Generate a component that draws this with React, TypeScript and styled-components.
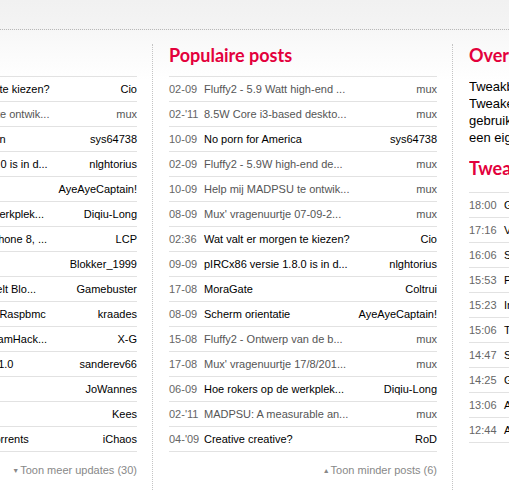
import React from "react";
import styled, { createGlobalStyle } from "styled-components";

const GlobalStyle = createGlobalStyle`
	html, body {
		margin: 0;
		padding: 0;
		background: #fff;
		overflow: hidden;
	}
	body {
		font-family: "Liberation Sans", Arial, sans-serif;
		font-size: 11px;
		color: #000;
	}
`;

const TopBar = styled.div`
	height: 29px;
	background: linear-gradient(#f1f1f1, #f4f4f4);
	border-bottom: 1px dotted #b8b8b8;
`;

const Main = styled.div`
	background: linear-gradient(#f7f7f7, #fff 50px);
	padding-top: 14px;
	height: 460px;
`;

// the first column sits partly off the left edge of the window
const Columns = styled.div`
	display: flex;
	margin-left: -148px;
`;

const Column = styled.section<{ $divider?: boolean }>`
	flex: 0 0 300px;
	box-sizing: border-box;
	padding: 0 15px 0 16px;
	height: 460px;
	border-left: ${(p) => (p.$divider ? "1px dotted #c4c4c4" : "1px solid transparent")};
`;

const Heading = styled.h2`
	margin: 0;
	height: 32px;
	padding-top: 1px;
	box-sizing: border-box;
	font-family: "Lato", "DejaVu Sans", sans-serif;
	font-weight: 700;
	font-size: 18px;
	line-height: 20px;
	color: #e3003c;
	white-space: nowrap;
	overflow: hidden;
`;

const SubHeading = styled(Heading)`
	margin-top: 11px;
	height: 35px;
`;

const List = styled.ul`
	list-style: none;
	margin: 0;
	padding: 0;
	border-top: 1px solid #e2e2e2;
`;

const Row = styled.li`
	display: flex;
	align-items: center;
	height: 24px;
	border-bottom: 1px solid #e2e2e2;
	white-space: nowrap;
`;

const Date = styled.span`
	flex: 0 0 35px;
	color: #666;
`;

const Title = styled.span<{ $seen?: boolean }>`
	flex: 1 1 auto;
	color: ${(p) => (p.$seen ? "#555" : "#000")};
`;

const Author = styled.span<{ $seen?: boolean }>`
	color: ${(p) => (p.$seen ? "#555" : "#000")};
	text-align: right;
`;

const More = styled.div`
	text-align: right;
	padding-top: 12px;
	font-size: 11px;
	color: #888;
`;

const Arrow = styled.span`
	font-size: 7px;
	margin-right: 1px;
	vertical-align: 1px;
`;

const Intro = styled.p`
	margin: 2px 0 0;
	font-size: 13px;
	line-height: 17px;
	white-space: nowrap;
	overflow: hidden;
`;

type Post = { date: string; title: string; author: string; seen?: boolean };

const latest: Post[] = [
	{ date: "02:36", title: "Wat valt er morgen te kiezen?", author: "Cio" },
	{ date: "10-09", title: "Help mij MADPSU te ontwik...", author: "mux", seen: true },
	{ date: "10-09", title: "Stroomstoring Japan", author: "sys64738" },
	{ date: "09-09", title: "pIRCx86 versie 1.8.0 is in d...", author: "nlghtorius" },
	{ date: "08-09", title: "Scherm orientatie", author: "AyeAyeCaptain!" },
	{ date: "06-09", title: "Hoe rokers op de werkplek...", author: "Diqiu-Long" },
	{ date: "06-09", title: "Review Windows Phone 8, ...", author: "LCP" },
	{ date: "05-09", title: "Mijn nieuwe pc", author: "Blokker_1999" },
	{ date: "05-09", title: "Mijn dochtertje speelt Blo...", author: "Gamebuster" },
	{ date: "04-09", title: "Thuisbioscoop met Raspbmc", author: "kraades" },
	{ date: "04-09", title: "Verslag van de DreamHack...", author: "X-G" },
	{ date: "03-09", title: "Reviews Android 4.1.0", author: "sanderev66" },
	{ date: "03-09", title: "Vakantiefoto's", author: "JoWannes" },
	{ date: "02-09", title: "Nieuwe server", author: "Kees" },
	{ date: "02-09", title: "Ziggo blokkeerde torrents", author: "iChaos" },
];

const popular: Post[] = [
	{ date: "02-09", title: "Fluffy2 - 5.9 Watt high-end ...", author: "mux", seen: true },
	{ date: "02-'11", title: "8.5W Core i3-based deskto...", author: "mux", seen: true },
	{ date: "10-09", title: "No porn for America", author: "sys64738" },
	{ date: "02-09", title: "Fluffy2 - 5.9W high-end de...", author: "mux", seen: true },
	{ date: "10-09", title: "Help mij MADPSU te ontwik...", author: "mux", seen: true },
	{ date: "08-09", title: "Mux' vragenuurtje 07-09-2...", author: "mux", seen: true },
	{ date: "02:36", title: "Wat valt er morgen te kiezen?", author: "Cio" },
	{ date: "09-09", title: "pIRCx86 versie 1.8.0 is in d...", author: "nlghtorius" },
	{ date: "17-08", title: "MoraGate", author: "Coltrui" },
	{ date: "08-09", title: "Scherm orientatie", author: "AyeAyeCaptain!" },
	{ date: "15-08", title: "Fluffy2 - Ontwerp van de b...", author: "mux", seen: true },
	{ date: "17-08", title: "Mux' vragenuurtje 17/8/201...", author: "mux", seen: true },
	{ date: "06-09", title: "Hoe rokers op de werkplek...", author: "Diqiu-Long" },
	{ date: "02-'11", title: "MADPSU: A measurable an...", author: "mux", seen: true },
	{ date: "04-'09", title: "Creative creative?", author: "RoD" },
];

const news: Post[] = [
	{ date: "18:00", title: "Google Chrome 22 beta", author: "" },
	{ date: "17:16", title: "Valve opent Steam", author: "" },
	{ date: "16:06", title: "Samsung Galaxy Note", author: "" },
	{ date: "15:53", title: "Prijzen Nexus 7", author: "" },
	{ date: "15:23", title: "Intel Haswell", author: "" },
	{ date: "15:06", title: "Toshiba Satellite", author: "" },
	{ date: "14:47", title: "Sony Xperia", author: "" },
	{ date: "14:25", title: "Gerucht: iPhone 5", author: "" },
	{ date: "13:06", title: "AMD Trinity", author: "" },
	{ date: "12:44", title: "Apple iOS 6", author: "" },
];

const PostList = ({ posts }: { posts: Post[] }) => (
	<List>
		{posts.map((p, i) => (
			<Row key={i}>
				<Date>{p.date}</Date>
				<Title $seen={p.seen}>{p.title}</Title>
				{p.author && <Author $seen={p.seen}>{p.author}</Author>}
			</Row>
		))}
	</List>
);

const App = () => {
	return (
		<>
			<GlobalStyle />
			<TopBar />
			<Main>
				<Columns>
					<Column>
						<Heading>Nieuwe posts</Heading>
						<PostList posts={latest} />
						<More>
							<Arrow>▼</Arrow>Toon meer updates (30)
						</More>
					</Column>

					<Column $divider>
						<Heading>Populaire posts</Heading>
						<PostList posts={popular} />
						<More>
							<Arrow>▲</Arrow>Toon minder posts (6)
						</More>
					</Column>

					<Column $divider>
						<Heading>Over Tweakblogs</Heading>
						<Intro>
							Tweakblogs is de blogdienst van
							<br />
							Tweakers.net. Iedere geregistreerde
							<br />
							gebruiker kan hier gratis
							<br />
							een eigen weblog beginnen.
						</Intro>
						<SubHeading>Tweakers.net nieuws</SubHeading>
						<PostList posts={news} />
					</Column>
				</Columns>
			</Main>
		</>
	);
};

export default App;
